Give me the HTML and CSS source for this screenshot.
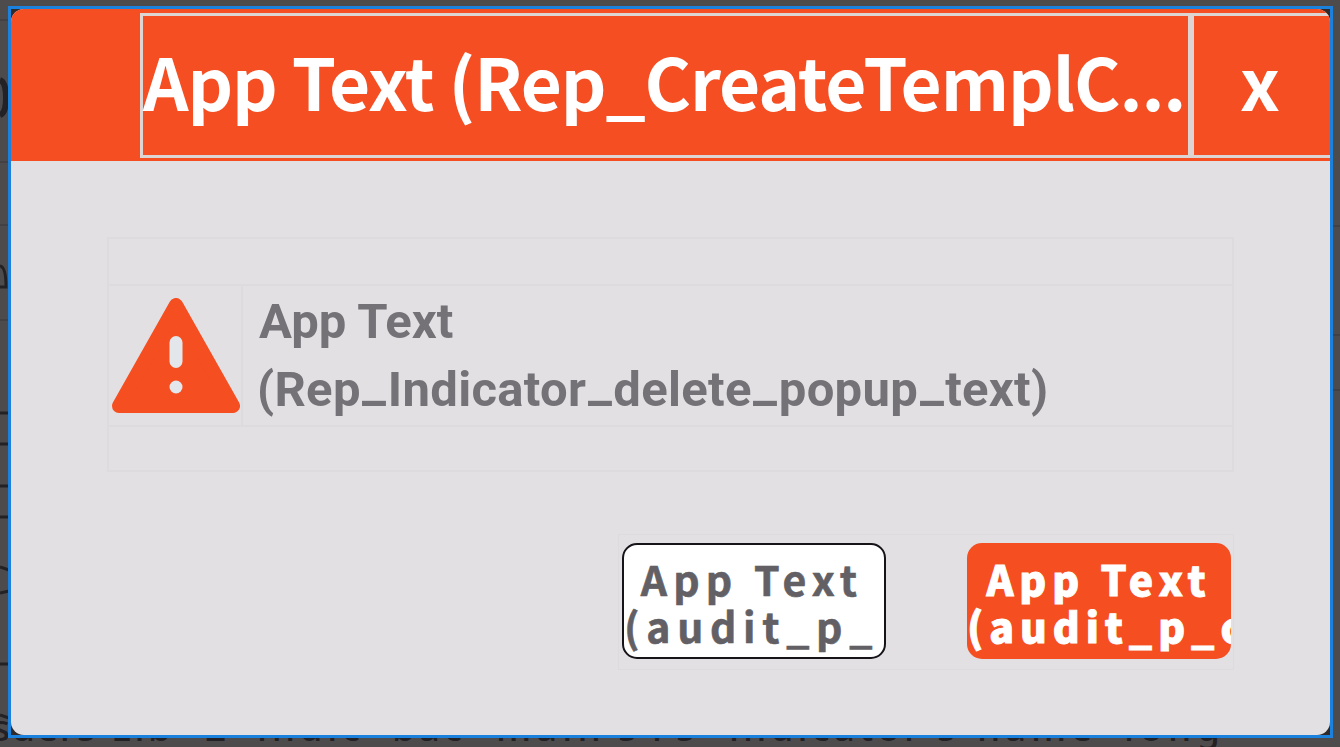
FILE: index.html
```html
<!DOCTYPE html>
<html lang="en">
<head>
  <meta charset="UTF-8" />
  <meta name="viewport" content="width=device-width, initial-scale=1.0" />
  <title>Delete Indicator</title>
  <link rel="stylesheet" href="styles.css">
</head>
<body>
  <!-- Dimmed page behind the popup -->
  <svg class="backdrop" viewBox="0 0 1340 747" aria-hidden="true">
    <path class="rule" d="M0 20H10M0 162H10M0 225H10M0 320H10M1333 226H1340M1333 335H1340M1333 390H1340" />
    <path class="stroke thick" d="M0 80Q6 82 6 98Q6 113 0 115" />
    <path class="stroke" d="M0 266Q6 267 6 287H0M0 413H9M0 444H9M0 486H9M0 517H9M0 567L9 570M0 593L9 591M0 664H9M0 715L9 718" />
    <g class="backdrop-text">
      <text x="-8" y="741" textLength="103">suers</text>
      <text x="111" y="741" textLength="60">Lib</text>
      <text x="205" y="741">2</text>
      <text x="257" y="741" textLength="103">indic</text>
      <text x="392" y="741" textLength="70">bac</text>
      <text x="496" y="741" textLength="140">main's</text>
      <text x="652" y="741" textLength="42">is</text>
      <text x="729" y="741" textLength="226">indicator's</text>
      <text x="977" y="741" textLength="115">name</text>
      <text x="1124" y="741" textLength="96">long</text>
    </g>
  </svg>

  <div class="frame">
    <div class="popup">
      <header class="popup-header">
        <h1 class="title">App Text (Rep_CreateTemplC...</h1>
        <button class="close">x</button>
      </header>

      <div class="popup-body">
        <div class="message">
          <div class="message-row">
            <div class="icon-cell">
              <svg class="warning" viewBox="0 0 128 115">
                <path d="M64 7L121 108H7Z" fill="#f54e20" stroke="#f54e20" stroke-width="14" stroke-linejoin="round" />
                <rect x="57.5" y="38" width="13" height="32" rx="6.5" fill="#e3e7eb" />
                <circle cx="64" cy="89" r="6.5" fill="#e3e7eb" />
              </svg>
            </div>
            <p class="message-text"><span class="line first">App Text</span><span class="line second">(Rep<i>_</i>Indicator<i>_</i>delete<i>_</i>popup<i>_</i>text)</span></p>
          </div>
        </div>

        <div class="actions">
          <button class="btn btn-cancel"><span>App Text</span><span class="key">(audit_p_c</span></button>
          <button class="btn btn-confirm"><span>App Text</span><span class="key">(audit_p_c</span></button>
        </div>
      </div>
    </div>
  </div>
</body>
</html>
```
FILE: styles.css
```css
/* RESET & BASE STYLES */
* {
  margin: 0;
  padding: 0;
  box-sizing: border-box;
}
body {
  width: 1340px;
  height: 747px;
  padding: 6px 7px 8px 8px;
  overflow: hidden;
  background: #4e4b4d;
  font-family: "Noto Sans CJK SC", "Noto Sans", sans-serif;
}
button {
  border: none;
  font-family: inherit;
}
/* BACKDROP */
.backdrop {
  position: absolute;
  top: 0;
  left: 0;
  width: 1340px;
  height: 747px;
}
.rule {
  stroke: #434143;
  stroke-width: 2;
}
.stroke {
  fill: none;
  stroke: #242224;
  stroke-width: 3;
}
.thick {
  stroke-width: 6;
}
.backdrop-text {
  fill: #232123;
  font: 500 37px "Noto Sans", sans-serif;
}
/* POPUP */
.frame {
  position: relative;
  width: 1325px;
  height: 732px;
  border: 3px solid #1c81dc;
  background: #302b2a;
}
.popup {
  display: flex;
  flex-direction: column;
  height: 100%;
  overflow: hidden;
  border-radius: 13px;
  background: #e2e0e3;
}
.popup-header {
  display: flex;
  height: 152px;
  padding: 4px 0 3px 129px;
  background: #f54e23;
  color: #fff;
}
.title {
  width: 1051px;
  height: 145px;
  border: 3px solid #ddd5d3;
  font-size: 71px;
  line-height: 129px;
  letter-spacing: -1.1px;
  white-space: nowrap;
}
.close {
  flex: 1;
  height: 145px;
  padding: 0 4px 10px 0;
  border: 3px solid #ddd5d3;
  border-right: none;
  background: none;
  color: #fff;
  font-size: 71px;
  font-weight: bold;
  line-height: 129px;
}
.popup-body {
  flex: 1;
  display: flex;
  flex-direction: column;
  padding: 76px 96px 0;
}
/* MESSAGE */
.message {
  height: 235px;
  padding-top: 45px;
  border: 2px solid #dddbde;
}
.message-row {
  display: flex;
  height: 143px;
  border-top: 2px solid #dddbde;
  border-bottom: 2px solid #dddbde;
}
.icon-cell {
  width: 134px;
  padding: 12px 0 0 3px;
  border-right: 2px solid #dddbde;
}
.warning {
  display: block;
  width: 128px;
  height: 115px;
}
.message-text {
  padding: 2px 0 0 16px;
  color: #747276;
  font: bold 49px/68px Roboto, sans-serif;
  letter-spacing: 0.3px;
}
.line {
  display: block;
  white-space: nowrap;
}
.first {
  letter-spacing: 0;
}
.second {
  margin-left: -2px;
}
.message-text i {
  display: inline-block;
  margin: 0 2.5px;
  font-style: normal;
  transform: translateY(-5px) scaleX(1.1);
}
/* BUTTONS */
.actions {
  display: flex;
  gap: 81px;
  align-self: flex-end;
  height: 136px;
  margin-top: 62px;
  padding: 8px 2px 8px 3px;
  border: 1px solid #dddbde;
}
.btn {
  width: 264px;
  height: 116px;
  padding-top: 5px;
  overflow: hidden;
  border-radius: 15px;
  font-size: 41px;
  font-weight: bold;
  line-height: 47px;
  letter-spacing: 6.2px;
  white-space: nowrap;
}
.btn span {
  display: block;
}
.btn .key {
  overflow: hidden;
  padding-bottom: 4px;
  text-align: left;
}
.btn-cancel {
  padding-right: 4px;
  border: 2px solid #171419;
  background: #fff;
  color: #626064;
  -webkit-text-stroke: 0.6px #626064;
}
.btn-cancel .key {
  letter-spacing: 6.7px;
}
.btn-confirm {
  background: #f54e20;
  color: #fff;
  font-weight: 900;
  letter-spacing: 5.9px;
  -webkit-text-stroke: 0.9px #fff;
}
```
